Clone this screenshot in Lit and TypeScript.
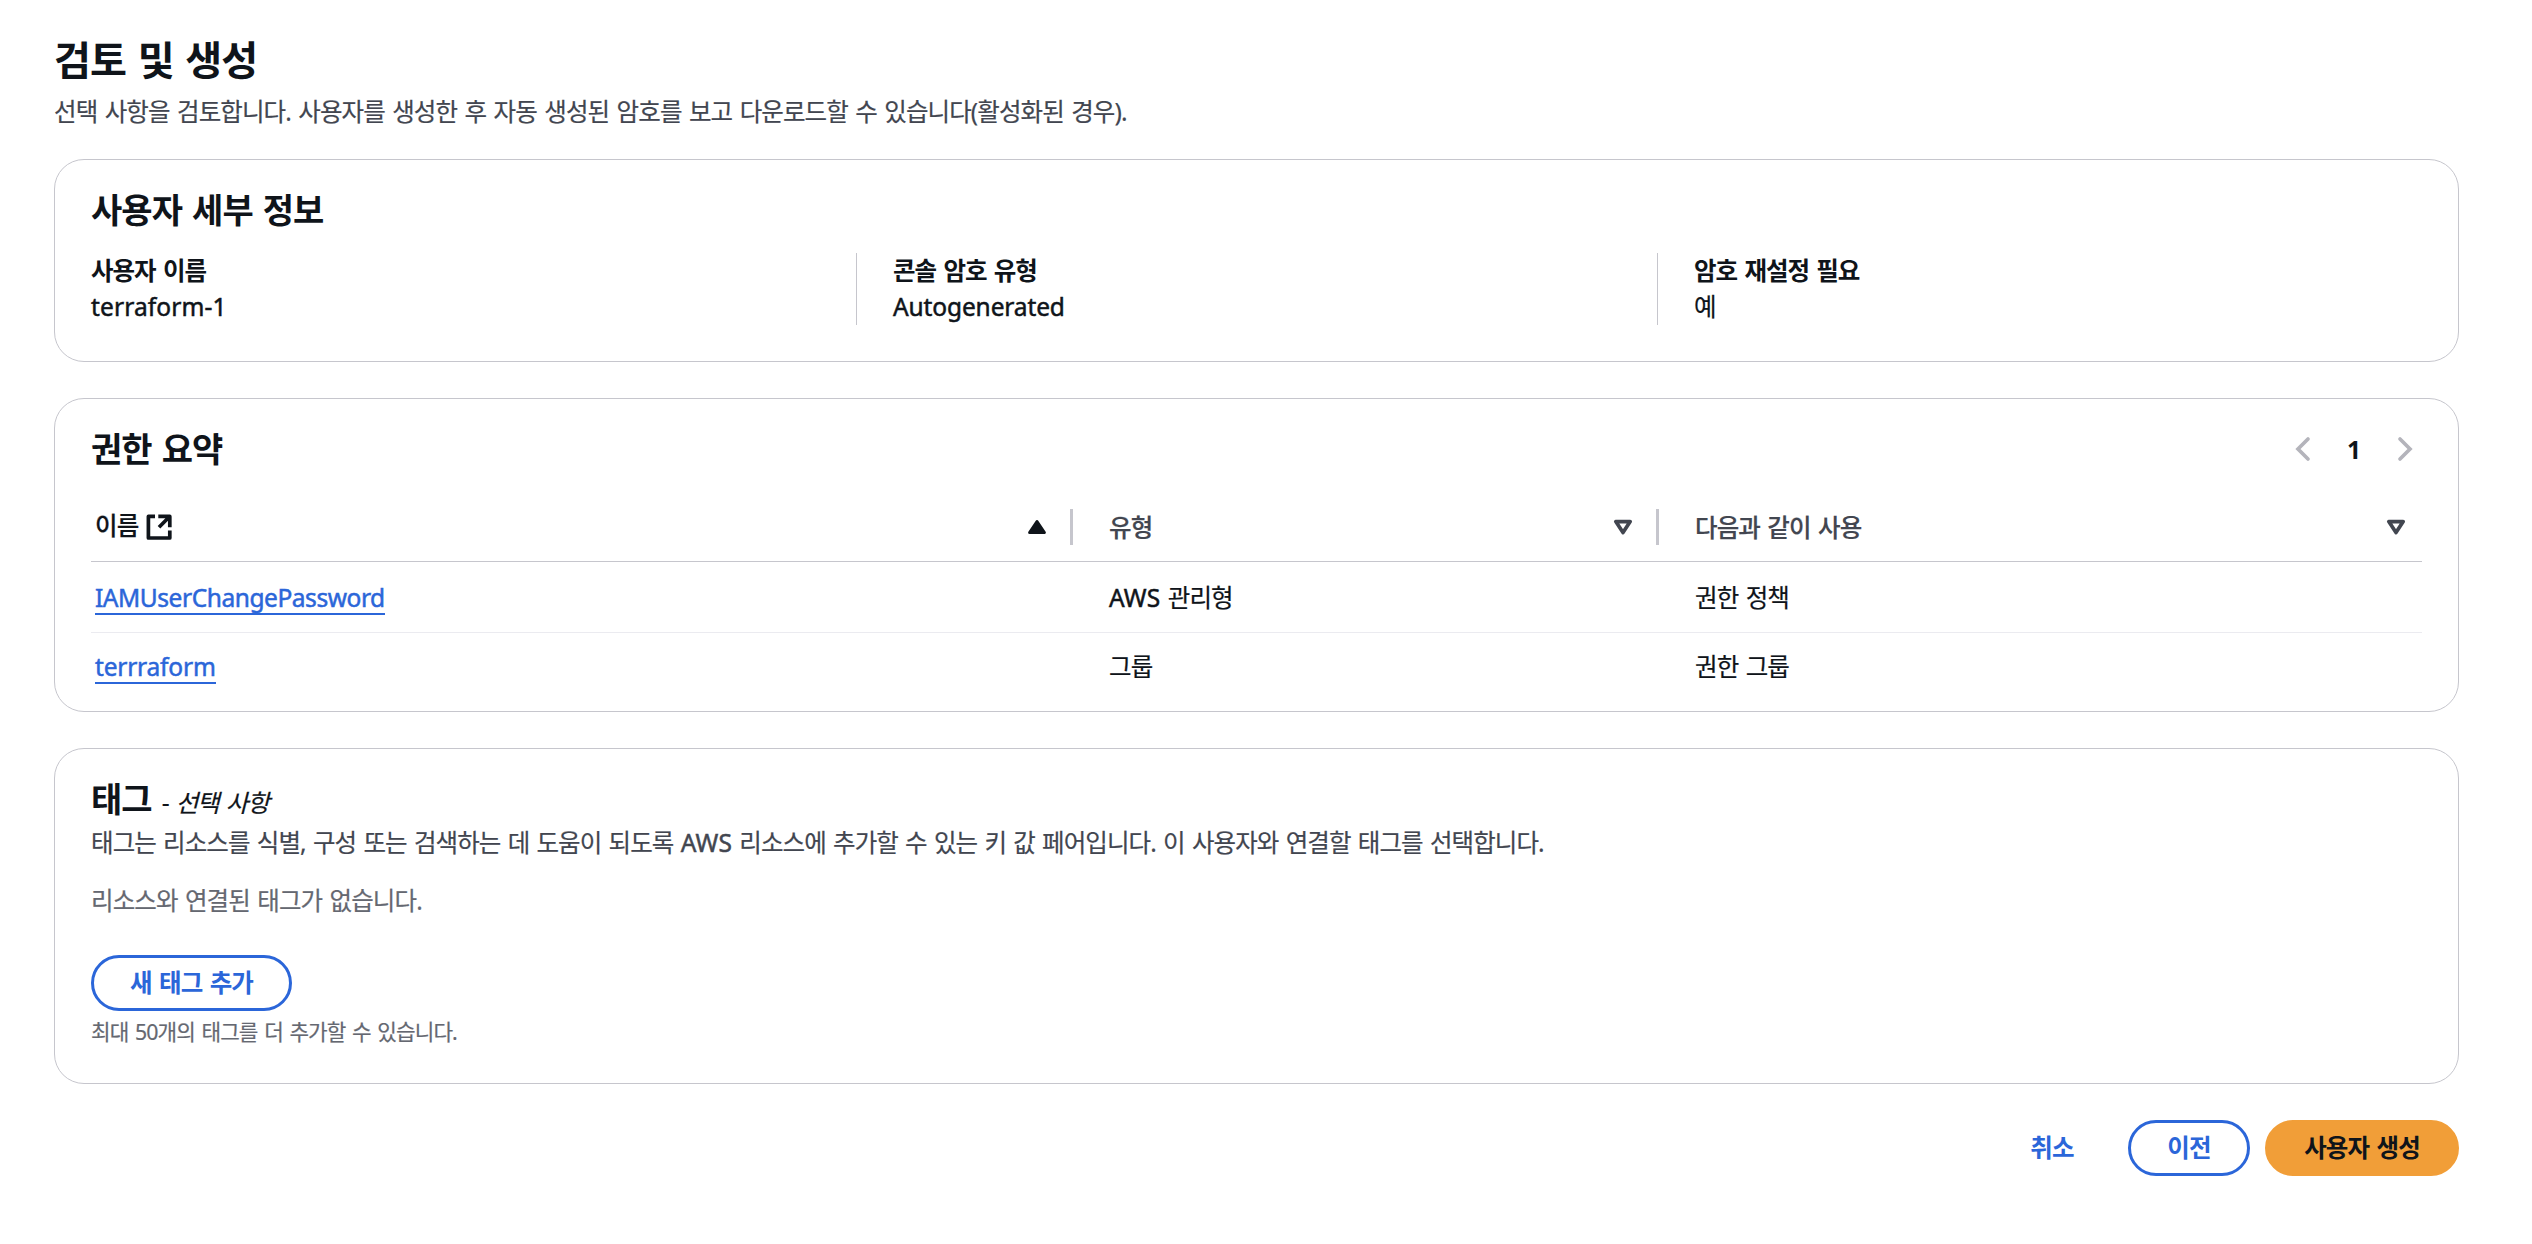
import { LitElement, css, html, svg, TemplateResult } from 'lit'
import { customElement, property } from 'lit/decorators.js'

interface Permission {
   name: string
   spacing: string
   type: string | TemplateResult
   usedAs: string
}

const aws = html`<span class="aws">AWS</span>`

const permissions: Permission[] = [
   { name: 'IAMUserChangePassword', spacing: 'latin', type: html`<span>${aws} 관리형</span>`, usedAs: '권한 정책' },
   { name: 'terrraform', spacing: 'latin loose', type: '그룹', usedAs: '권한 그룹' },
]

const details = [
   { label: '사용자 이름', value: 'terraform-1', spacing: 'latin loose' },
   { label: '콘솔 암호 유형', value: 'Autogenerated', spacing: 'latin' },
   { label: '암호 재설정 필요', value: '예', spacing: '' },
]

const shapes = {
   external: svg`<path d="M9 2.4H2.4V24h21.4v-7.4M12.3 2.4h11.5v10.9M23.4 2.8L13 13.2" fill="none" stroke="currentColor" stroke-width="3.7" stroke-linejoin="round" />`,
   prev: svg`<path d="M18 3L8 13l10 10" fill="none" stroke="currentColor" stroke-width="3.7" stroke-linecap="round" />`,
   next: svg`<path d="M8 3l10 10L8 23" fill="none" stroke="currentColor" stroke-width="3.7" stroke-linecap="round" />`,
   sorted: svg`<path d="M13 7.5L20.4 18.6H5.6Z" fill="currentColor" stroke="currentColor" stroke-width="3" stroke-linejoin="round" />`,
   sortable: svg`<path d="M13 18.6L5.8 7.6H20.2Z" fill="none" stroke="currentColor" stroke-width="3.7" stroke-linejoin="round" />`,
}

@customElement('ui-icon')
export class UiIcon extends LitElement {

   @property() name: keyof typeof shapes = 'external'

   render() {
      return html`<svg viewBox="0 0 26 26" width="26" height="26" aria-hidden="true">${shapes[this.name]}</svg>`
   }

   static styles = css`
      :host {
         display: inline-flex;
         width: 26px;
         height: 26px;
      }
   `
}

@customElement('app-root')
export class AppRoot extends LitElement {

   renderDetails() {
      return html`
         <section class="card details-card">
            <h2>사용자 세부 정보</h2>
            <dl class="details">
               ${details.map(d => html`
                  <div class="detail">
                     <dt>${d.label}</dt>
                     <dd class=${d.spacing}>${d.value}</dd>
                  </div>
               `)}
            </dl>
         </section>
      `
   }

   renderPermissions() {
      return html`
         <section class="card permissions-card">
            <div class="card-header">
               <h2>권한 요약</h2>
               <nav class="pagination">
                  <ui-icon name="prev"></ui-icon>
                  <span class="page">1</span>
                  <ui-icon name="next"></ui-icon>
               </nav>
            </div>
            <div class="row head">
               <div class="cell active">
                  <span class="with-icon"><span class="name">이름</span> <ui-icon name="external"></ui-icon></span>
                  <ui-icon name="sorted"></ui-icon>
               </div>
               <div class="cell">유형 <ui-icon name="sortable"></ui-icon></div>
               <div class="cell">다음과 같이 사용 <ui-icon name="sortable"></ui-icon></div>
            </div>
            ${permissions.map(p => html`
               <div class="row">
                  <div class="cell"><a class=${p.spacing}>${p.name}</a></div>
                  <div class="cell">${p.type}</div>
                  <div class="cell">${p.usedAs}</div>
               </div>
            `)}
         </section>
      `
   }

   renderTags() {
      return html`
         <section class="card tags-card">
            <h2>태그 <span class="optional">- <i>선택 사항</i></span></h2>
            <p class="description">태그는 리소스를 식별, 구성 또는 검색하는 데 도움이 되도록 ${aws} 리소스에 추가할 수 있는 키 값 페어입니다. 이 사용자와 연결할 태그를 선택합니다.</p>
            <p class="empty">리소스와 연결된 태그가 없습니다.</p>
            <button class="button add">새 태그 추가</button>
            <p class="hint">최대 50개의 태그를 더 추가할 수 있습니다.</p>
         </section>
      `
   }

   render() {
      return html`
         <header>
            <h1>검토 및 생성</h1>
            <p class="description">선택 사항을 검토합니다. 사용자를 생성한 후 자동 생성된 암호를 보고 다운로드할 수 있습니다(활성화된 경우).</p>
         </header>
         ${this.renderDetails()}
         ${this.renderPermissions()}
         ${this.renderTags()}
         <footer>
            <button class="button link">취소</button>
            <button class="button previous">이전</button>
            <button class="button primary">사용자 생성</button>
         </footer>
      `
   }

   static styles = css`
      :host {
         display: flex;
         flex-direction: column;
         box-sizing: border-box;
         height: 1244px;
         padding: 36px 73px 0 54px;
         background: #fff;
         color: #0f141a;
         font-family: 'Noto Sans', 'Noto Sans CJK KR', sans-serif;
         font-size: 24.5px;
         line-height: 37px;
         letter-spacing: -0.037em;
         word-spacing: 0.08em;
         white-space: nowrap;
         -webkit-text-stroke: 0.2px;
      }

      h1, h2, p, dl, dd {
         margin: 0;
      }

      header {
         height: 123px;
      }

      h1 {
         font-size: 40.2px;
         line-height: 48px;
         font-weight: 700;
      }

      h2 {
         font-size: 34px;
         line-height: 44px;
         font-weight: 700;
      }

      h1, h2, dt, .page, .button {
         -webkit-text-stroke: 0;
      }

      .description {
         color: #424650;
      }

      header .description {
         margin-top: 9px;
      }

      .card {
         box-sizing: border-box;
         border: 1px solid #c6c6cd;
         border-radius: 30px;
         padding: 0 36px;
      }

      .details-card {
         height: 203px;
         padding-top: 28px;
      }

      .permissions-card {
         height: 314px;
         margin-top: 36px;
         padding-top: 28px;
      }

      .tags-card {
         height: 336px;
         margin-top: 36px;
         padding-top: 28px;
      }

      .details {
         display: grid;
         grid-template-columns: 765px 801px 1fr;
         margin-top: 21px;
      }

      .detail + .detail {
         border-left: 1px solid #c6c6cd;
         padding-left: 36px;
      }

      dt {
         line-height: 36px;
         font-weight: 700;
         letter-spacing: -0.041em;
      }

      dd {
         line-height: 36px;
      }

      .latin {
         letter-spacing: -0.018em;
         -webkit-text-stroke: 0.5px;
      }

      .latin.loose {
         letter-spacing: -0.008em;
      }

      dd.latin {
         letter-spacing: -0.005em;
      }

      dd.latin.loose {
         letter-spacing: 0.005em;
      }

      .aws {
         letter-spacing: 0.006em;
         -webkit-text-stroke: 0.5px;
      }

      .card-header {
         display: flex;
         justify-content: space-between;
         align-items: center;
      }

      .pagination {
         display: flex;
         align-items: center;
         gap: 31px;
         padding-right: 4px;
         color: #b4b4bb;
      }

      .page {
         box-sizing: border-box;
         width: 14px;
         padding-right: 2px;
         text-align: center;
         color: #0f141a;
         font-weight: 700;
      }

      .row {
         display: grid;
         grid-template-columns: 982px 586px 1fr;
         align-items: center;
         box-sizing: border-box;
         height: 66px;
      }

      .row.head {
         height: 69px;
         margin-top: 22px;
         border-bottom: 1px solid #c6c6cd;
         color: #424650;
         font-weight: 500;
      }

      .row.head + .row {
         height: 71px;
         border-bottom: 1px solid #ebebf0;
      }

      .cell {
         display: flex;
         align-items: center;
         justify-content: space-between;
         padding-left: 36px;
      }

      .cell:first-child {
         padding-left: 4px;
      }

      .head .cell {
         height: 36px;
         padding-right: 20.5px;
      }

      .head .cell:not(:last-child) {
         border-right: 3px solid #c6c6cd;
      }

      .head .cell:last-child {
         padding-right: 13px;
      }

      .active {
         color: #0f141a;
      }

      .with-icon {
         display: flex;
         align-items: center;
         gap: 8px;
      }

      .name {
         padding-bottom: 3px;
      }

      a {
         margin-top: 2px;
         color: #2b66d9;
         line-height: 31px;
         border-bottom: 2px solid #2b66d9;
      }

      .optional {
         font-size: 24.5px;
         font-weight: 400;
         letter-spacing: -0.045em;
         -webkit-text-stroke: 0.2px;
      }

      .tags-card .description {
         margin-top: -1px;
         word-spacing: 0.071em;
      }

      .empty {
         margin-top: 21px;
         color: #656871;
      }

      .button {
         box-sizing: border-box;
         height: 56px;
         padding: 0 0 2px;
         border: 3px solid #2b66d9;
         border-radius: 28px;
         background: none;
         color: #2b66d9;
         font: inherit;
         font-weight: 700;
         letter-spacing: inherit;
         word-spacing: inherit;
      }

      .add {
         width: 201px;
         margin-top: 36px;
      }

      .hint {
         margin-top: 3px;
         color: #656871;
         font-size: 21.3px;
         line-height: 36px;
      }

      footer {
         display: flex;
         justify-content: flex-end;
         margin-top: 36px;
      }

      .link {
         width: 120px;
         border-color: transparent;
      }

      .previous {
         width: 122px;
         margin-left: 16px;
      }

      .primary {
         width: 194px;
         margin-left: 15px;
         border-color: #f19e38;
         background: #f19e38;
         color: #0f141a;
      }
   `
}
